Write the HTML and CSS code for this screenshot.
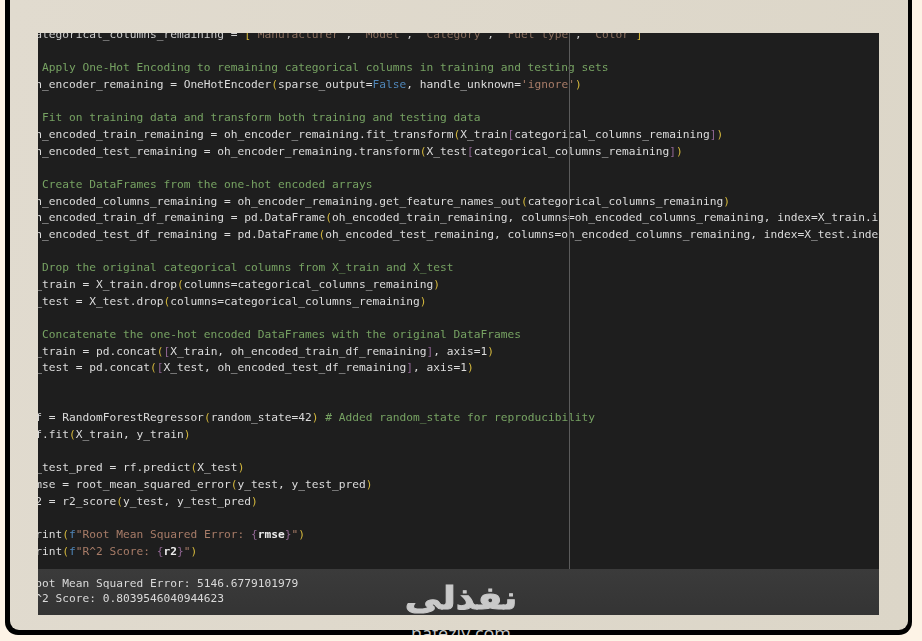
FILE: index.html
```html
<!DOCTYPE html>
<html lang="en">
<head>
<meta charset="utf-8">
<title>Notebook code</title>
<link rel="stylesheet" href="styles.css">
</head>
<body>
<main class="frame">
  <div class="site">nafezly.com</div>
  <section class="shot">
    <div class="code-pane">
<pre class="code"><span class="t">categorical_columns_remaining = <span class="y">[</span><span class="s">'Manufacturer'</span>, <span class="s">'Model'</span>, <span class="s">'Category'</span>, <span class="s">'Fuel type'</span>, <span class="s">'Color'</span><span class="y">]</span></span>

<span class="c"># Apply One-Hot Encoding to remaining categorical columns in training and testing sets</span>
oh_encoder_remaining = OneHotEncoder<span class="y">(</span>sparse_output=<span class="k">False</span>, handle_unknown=<span class="s">'ignore'</span><span class="y">)</span>

<span class="c"># Fit on training data and transform both training and testing data</span>
oh_encoded_train_remaining = oh_encoder_remaining.fit_transform<span class="y">(</span>X_train<span class="p">[</span>categorical_columns_remaining<span class="p">]</span><span class="y">)</span>
oh_encoded_test_remaining = oh_encoder_remaining.transform<span class="y">(</span>X_test<span class="p">[</span>categorical_columns_remaining<span class="p">]</span><span class="y">)</span>

<span class="c"># Create DataFrames from the one-hot encoded arrays</span>
oh_encoded_columns_remaining = oh_encoder_remaining.get_feature_names_out<span class="y">(</span>categorical_columns_remaining<span class="y">)</span>
oh_encoded_train_df_remaining = pd.DataFrame<span class="y">(</span>oh_encoded_train_remaining, columns=oh_encoded_columns_remaining, index=X_train.index<span class="y">)</span>
oh_encoded_test_df_remaining = pd.DataFrame<span class="y">(</span>oh_encoded_test_remaining, columns=oh_encoded_columns_remaining, index=X_test.index<span class="y">)</span>

<span class="c"># Drop the original categorical columns from X_train and X_test</span>
X_train = X_train.drop<span class="y">(</span>columns=categorical_columns_remaining<span class="y">)</span>
X_test = X_test.drop<span class="y">(</span>columns=categorical_columns_remaining<span class="y">)</span>

<span class="c"># Concatenate the one-hot encoded DataFrames with the original DataFrames</span>
X_train = pd.concat<span class="y">(</span><span class="p">[</span>X_train, oh_encoded_train_df_remaining<span class="p">]</span>, axis=1<span class="y">)</span>
X_test = pd.concat<span class="y">(</span><span class="p">[</span>X_test, oh_encoded_test_df_remaining<span class="p">]</span>, axis=1<span class="y">)</span>


rf = RandomForestRegressor<span class="y">(</span>random_state=42<span class="y">)</span> <span class="c"># Added random_state for reproducibility</span>
rf.fit<span class="y">(</span>X_train, y_train<span class="y">)</span>

y_test_pred = rf.predict<span class="y">(</span>X_test<span class="y">)</span>
rmse = root_mean_squared_error<span class="y">(</span>y_test, y_test_pred<span class="y">)</span>
r2 = r2_score<span class="y">(</span>y_test, y_test_pred<span class="y">)</span>

print<span class="y">(</span><span class="k">f</span><span class="s">"Root Mean Squared Error: </span><span class="p">{</span><b class="v">rmse</b><span class="p">}</span><span class="s">"</span><span class="y">)</span>
print<span class="y">(</span><span class="k">f</span><span class="s">"R^2 Score: </span><span class="p">{</span><b class="v">r2</b><span class="p">}</span><span class="s">"</span><span class="y">)</span></pre>
      <div class="ruler"></div>
    </div>
    <div class="output-pane">
<pre class="output">Root Mean Squared Error: 5146.6779101979
R^2 Score: 0.8039546040944623</pre>
    </div>
    <div class="watermark">
      <div class="mark" lang="ar" dir="rtl">نفذلى</div>
    </div>
  </section>
</main>
</body>
</html>
```
FILE: styles.css
```css
* { box-sizing: border-box; }
html, body { margin: 0; height: 641px; overflow: hidden; }
body { background: #fdf3e6; padding: 0 10px 6px 5px; }
.frame {
  position: relative;
  height: 635px;
  border: 5px solid #000;
  border-top: 0;
  border-right-width: 4px;
  border-radius: 0 0 13px 13px;
  background: #000;
}
.shot {
  position: relative;
  z-index: 1;
  height: 630px;
  background: linear-gradient(100deg, #e1dbcf, #dcd6c8);
  padding: 33px 29px 15px 28px;
  border-radius: 0 0 9px 9px;
  display: flex;
  flex-direction: column;
}
.code-pane {
  position: relative;
  flex: none;
  height: 536px;
  background: #1e1e1e;
  overflow: hidden;
}
.code, .output {
  margin: 0 0 0 -9.5px;
  font-family: "DejaVu Sans Mono", monospace;
  font-size: 11.21px;
  white-space: pre;
  filter: blur(0.45px);
}
.code {
  margin-top: -6px;
  line-height: 16.67px;
  color: #dcdcdc;
}
.t { color: #cfcfcf; }
.t .s { color: #8a6f5f; }
.c { color: #76a262; }
.s { color: #a87c68; }
.k { color: #4f86b8; }
.y { color: #d2b63c; }
.p { color: #8f6592; }
.v { color: #ececec; }
.ruler {
  position: absolute;
  top: 0;
  bottom: 0;
  left: 531px;
  width: 1px;
  background: #5b5b5b;
}
.output-pane {
  flex: 1;
  background: linear-gradient(#3b3b3b, #343434);
  padding-top: 7px;
  overflow: hidden;
}
.output {
  line-height: 15px;
  color: #dadada;
}
.watermark {
  position: absolute;
  left: 395px;
  top: 577px;
  width: 111px;
  height: 42px;
  display: flex;
  justify-content: center;
  align-items: center;
}
.mark {
  font-family: "DejaVu Sans", sans-serif;
  font-weight: 700;
  font-size: 32px;
  line-height: 42px;
  color: #c9c9c9;
  -webkit-text-stroke: 1px #c9c9c9;
  transform: scaleX(1.15);
}
.site {
  position: absolute;
  z-index: 0;
  left: 389px;
  top: 623px;
  width: 124px;
  height: 12px;
  overflow: hidden;
  font-family: "Open Sans", sans-serif;
  font-size: 18px;
  line-height: 20px;
  text-align: center;
  color: #c8c8c8;
}
```
